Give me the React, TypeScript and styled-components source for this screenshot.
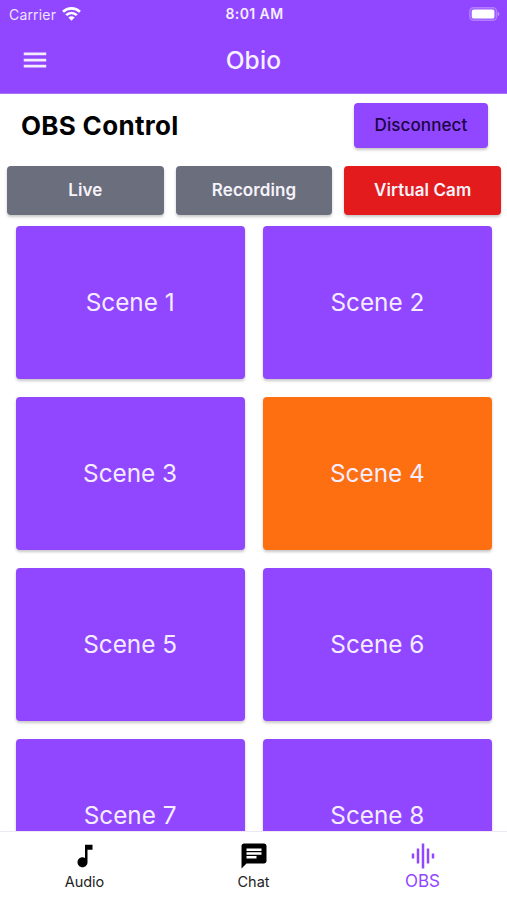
import React from "react";
import styled, { createGlobalStyle } from "styled-components";

const PURPLE = "#9147ff";

const GlobalStyle = createGlobalStyle`
  * { box-sizing: border-box; }
  body { margin: 0; background: #fff; }
  button { border: 0; padding: 0; font: inherit; color: inherit; background: none; }
`;

const Screen = styled.div`
  width: 507px;
  height: 900px;
  display: flex;
  flex-direction: column;
  overflow: hidden;
  background: #fff;
  font-family: Inter, "Liberation Sans", sans-serif;
`;

const Header = styled.header`
  flex: none;
  height: 94px;
  background: ${PURPLE};
  color: #fff;
  border-bottom: 1px solid #a873f8;
`;

const StatusBar = styled.div`
  height: 27px;
  padding: 0 7px 0 9px;
  display: grid;
  grid-template-columns: 1fr auto 1fr;
  align-items: center;
  font-size: 14px;
  line-height: 27px;
`;

const Carrier = styled.div`
  display: flex;
  align-items: center;
  gap: 6px;
  letter-spacing: 0.18px;
`;

const CarrierName = styled.span`
  opacity: 0.85;
`;

const Clock = styled.div`
  font-weight: 600;
  font-size: 14px;
  line-height: 28px;
  letter-spacing: 0.4px;
  opacity: 0.9;
`;

const Battery = styled.svg`
  justify-self: end;
`;

const AppBar = styled.div`
  height: 66px;
  padding: 0 20px;
  display: grid;
  grid-template-columns: 30px 1fr 30px;
  align-items: center;
`;

const MenuButton = styled.button`
  height: 30px;
`;

const AppTitle = styled.h1`
  margin: 0;
  text-align: center;
  font-size: 24.5px;
  font-weight: 500;
  letter-spacing: 0.2px;
  opacity: 0.92;
`;

const Main = styled.main`
  flex: 1;
  min-height: 0;
  overflow: hidden;
`;

const TitleRow = styled.div`
  height: 72px;
  padding: 9px 19px 0 21px;
  display: flex;
  justify-content: space-between;
  align-items: flex-start;
`;

const PageTitle = styled.h2`
  margin: 0;
  font-size: 26px;
  line-height: 46px;
  font-weight: 650;
  letter-spacing: 0.3px;
  color: #000;
`;

const RaisedButton = styled.button<{ $color: string }>`
  display: flex;
  align-items: center;
  justify-content: center;
  border-radius: 4px;
  background: ${(p) => p.$color};
  box-shadow: 0 2px 3px rgba(0, 0, 0, 0.22);
`;

const DisconnectButton = styled(RaisedButton)`
  width: 134px;
  height: 45px;
  padding-bottom: 1px;
  color: #1c0542;
  font-size: 17px;
  font-weight: 500;
  letter-spacing: 0.1px;
`;

const ToggleRow = styled.div`
  display: grid;
  grid-template-columns: repeat(3, 1fr);
  gap: 12px;
  padding: 0 6px 0 7px;
`;

const ToggleButton = styled(RaisedButton)`
  height: 49px;
  padding-bottom: 2px;
  color: #f6f3fa;
  font-size: 17px;
  font-weight: 560;
  letter-spacing: 0.08px;
`;

const SceneGrid = styled.div`
  display: grid;
  grid-template-columns: repeat(2, 1fr);
  grid-auto-rows: 153px;
  gap: 18px;
  padding: 11px 15px 0 15.5px;
`;

const SceneButton = styled(RaisedButton)`
  padding-bottom: 2px;
  color: #f5edff;
  font-size: 24.3px;
  letter-spacing: 0;
`;

const TabBar = styled.nav`
  flex: none;
  height: 69px;
  display: grid;
  grid-template-columns: repeat(3, 1fr);
  background: #fff;
  border-top: 1px solid #eee8f5;
`;

const Tab = styled.button<{ $active?: boolean }>`
  display: flex;
  flex-direction: column;
  align-items: center;
  padding-top: 9px;
  color: ${(p) => (p.$active ? PURPLE : "#000")};
`;

const TabLabel = styled.span<{ $active?: boolean }>`
  font-size: ${(p) => (p.$active ? 17 : 14.5)}px;
  line-height: ${(p) => (p.$active ? 20 : 21)}px;
  color: ${(p) => (p.$active ? PURPLE : "#222")};
`;

const scenes = [1, 2, 3, 4, 5, 6, 7, 8];
const activeScene = 4;

const tabs = [
  {
    label: "Audio",
    path: "M12 3v10.55c-.59-.34-1.27-.55-2-.55-2.21 0-4 1.79-4 4s1.79 4 4 4 4-1.79 4-4V7h4V3h-6z",
  },
  {
    label: "Chat",
    path: "M20 2H4c-1.1 0-1.99.9-1.99 2L2 22l4-4h14c1.1 0 2-.9 2-2V4c0-1.1-.9-2-2-2zM6 9h12v2H6V9zm8 5H6v-2h8v2zm4-6H6V6h12v2z",
  },
  {
    label: "OBS",
    path: "M7 18h2V6H7v12zm4 4h2V2h-2v20zm-8-8h2v-4H3v4zm12 4h2V6h-2v12zm4-8v4h2v-4h-2z",
    active: true,
  },
];

export default function App() {
  return (
    <Screen>
      <GlobalStyle />
      <Header>
        <StatusBar>
          <Carrier>
            <CarrierName>Carrier</CarrierName>
            <svg width="19" height="14" viewBox="0 0 19 14" fill="none" stroke="#fff" strokeWidth="2.6">
              <path d="M1 4.8C5.7.2 13.3.2 18 4.8" />
              <path d="M4.2 8.1C7.2 5.2 11.8 5.2 14.8 8.1" />
              <path d="M6.4 10.6C8.1 8.9 10.9 8.9 12.6 10.6L9.5 13.8Z" fill="#fff" stroke="none" />
            </svg>
          </Carrier>
          <Clock>8:01 AM</Clock>
          <Battery width="31" height="14" viewBox="0 0 31 14">
            <rect x="0.7" y="0.6" width="27" height="12.8" rx="3.8" fill="#fff" fillOpacity="0.12" stroke="#fff" strokeOpacity="0.26" strokeWidth="1.2" />
            <rect x="2.8" y="2.4" width="22.6" height="9.2" rx="2.2" fill="#fff" />
            <path d="M28.7 4.8q1.8.7 1.8 2.2t-1.8 2.2z" fill="#fff" fillOpacity="0.4" />
          </Battery>
        </StatusBar>
        <AppBar>
          <MenuButton aria-label="Menu">
            <svg width="30" height="30" viewBox="0 0 24 24" fill="#f4ebff">
              <path d="M3 18h18v-2.2H3V18zm0-4.9h18v-2.2H3v2.2zM3 6v2.2h18V6H3z" />
            </svg>
          </MenuButton>
          <AppTitle>Obio</AppTitle>
        </AppBar>
      </Header>
      <Main>
        <TitleRow>
          <PageTitle>OBS Control</PageTitle>
          <DisconnectButton $color={PURPLE}>Disconnect</DisconnectButton>
        </TitleRow>
        <ToggleRow>
          <ToggleButton $color="#6b6e7d">Live</ToggleButton>
          <ToggleButton $color="#6b6e7d">Recording</ToggleButton>
          <ToggleButton $color="#e31b1d">Virtual Cam</ToggleButton>
        </ToggleRow>
        <SceneGrid>
          {scenes.map((n) => (
            <SceneButton key={n} $color={n === activeScene ? "#fd6f10" : PURPLE}>
              Scene {n}
            </SceneButton>
          ))}
        </SceneGrid>
      </Main>
      <TabBar>
        {tabs.map((t) => (
          <Tab key={t.label} $active={t.active}>
            <svg width="30" height="30" viewBox="0 0 24 24" fill="currentColor">
              <path d={t.path} />
            </svg>
            <TabLabel $active={t.active}>{t.label}</TabLabel>
          </Tab>
        ))}
      </TabBar>
    </Screen>
  );
}
